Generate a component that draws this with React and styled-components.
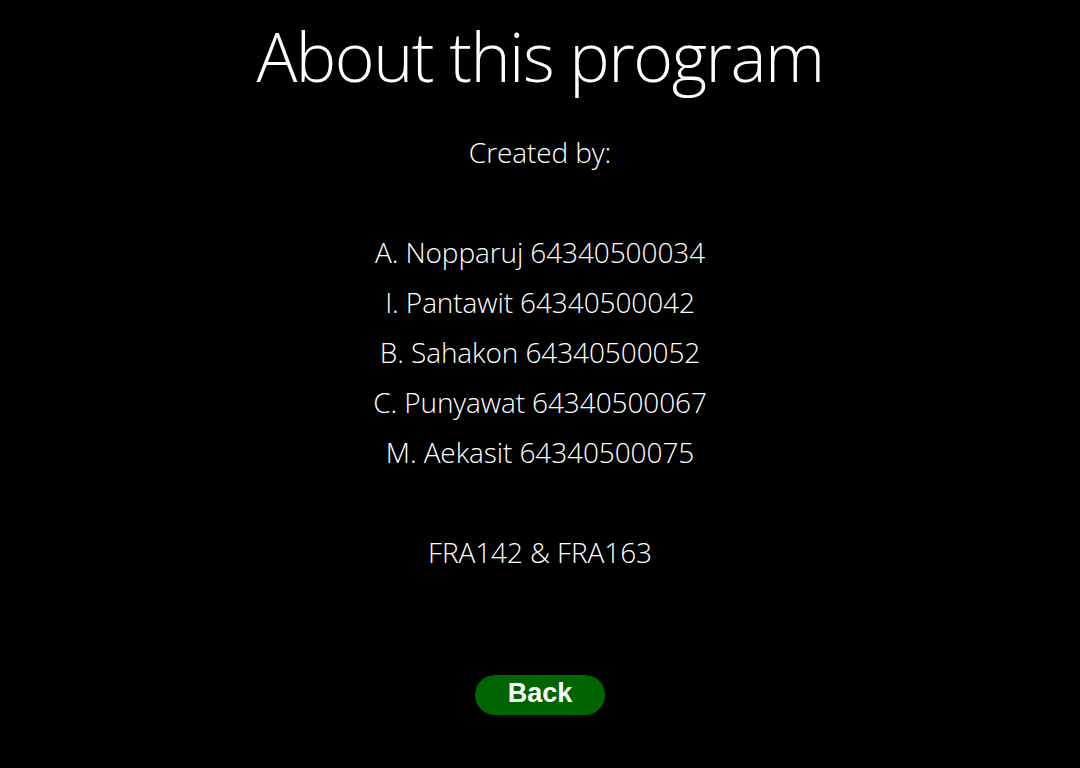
import React from "react";
import styled, { createGlobalStyle } from "styled-components";

const Global = createGlobalStyle`
  html, body { margin: 0; padding: 0; background: #000; }
  body { font-family: "Open Sans", "Noto Sans", sans-serif; }
`;

const Page = styled.div`
  width: 1080px;
  height: 768px;
  background: #000;
  color: #fff;
  display: flex;
  flex-direction: column;
  align-items: center;
`;

const Title = styled.h1`
  margin: 16px 0 0;
  font-weight: 300;
  font-size: 68px;
  line-height: 80px;
  letter-spacing: -1.5px;
`;

const Lines = styled.div`
  margin-top: 31px;
  display: flex;
  flex-direction: column;
  align-items: center;
  font-weight: 300;
  font-size: 28px;
  letter-spacing: -0.1px;
`;

const Line = styled.div`
  height: 50px;
  line-height: 50px;
  white-space: pre;
`;

const BackButton = styled.button`
  margin-top: 98px;
  width: 130px;
  height: 40px;
  border: none;
  border-radius: 20px;
  background: #006400;
  color: #fff;
  font-family: "Liberation Sans", Arial, sans-serif;
  font-weight: 700;
  font-size: 27px;
  line-height: 36px;
  padding: 0 0 4px;
  cursor: pointer;
`;

const lines = [
  "Created by:",
  "",
  "A. Nopparuj 64340500034",
  "I. Pantawit 64340500042",
  "B. Sahakon 64340500052",
  "C. Punyawat 64340500067",
  "M. Aekasit 64340500075",
  "",
  "FRA142 & FRA163",
];

export default function App() {
  return (
    <>
      <Global />
      <Page>
        <Title>About this program</Title>
        <Lines>
          {lines.map((t, i) => (
            <Line key={i}>{t || " "}</Line>
          ))}
        </Lines>
        <BackButton>Back</BackButton>
      </Page>
    </>
  );
}
